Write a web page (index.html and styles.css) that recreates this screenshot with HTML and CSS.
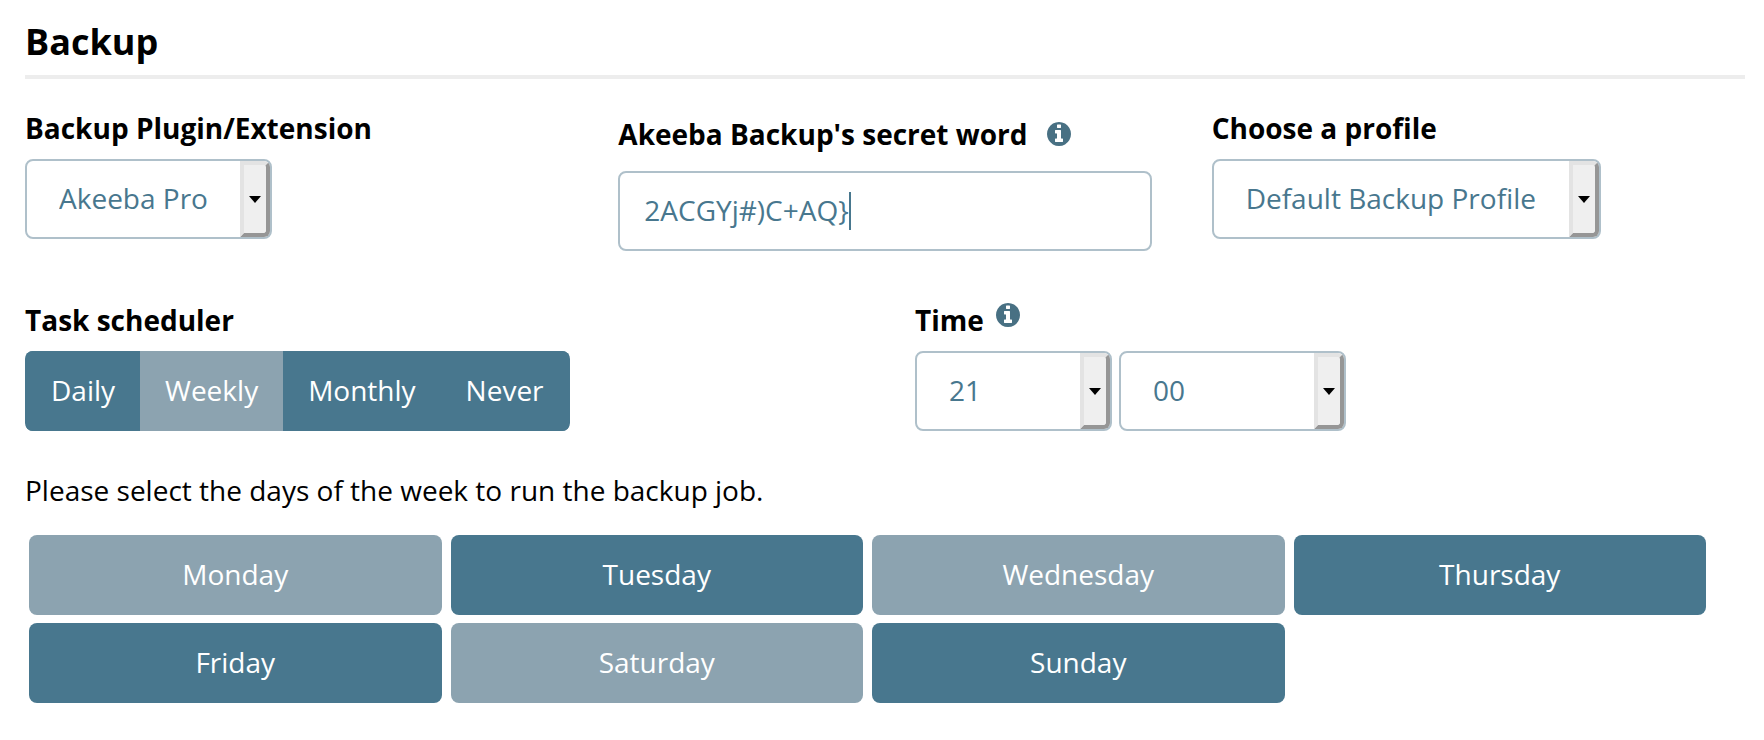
FILE: index.html
```html
<!DOCTYPE html>
<html lang="en">
<head>
<meta charset="utf-8">
<title>Backup</title>
<link rel="stylesheet" href="styles.css">
</head>
<body>
<svg class="sprite" aria-hidden="true">
  <symbol id="info" viewBox="128 128 1536 1536">
    <path d="M1152 1376v-160q0-14-9-23t-23-9h-96v-512q0-14-9-23t-23-9h-320q-14 0-23 9t-9 23v160q0 14 9 23t23 9h96v320h-96q-14 0-23 9t-9 23v160q0 14 9 23t23 9h448q14 0 23-9t9-23zm-128-896v-160q0-14-9-23t-23-9h-192q-14 0-23 9t-9 23v160q0 14 9 23t23 9h192q14 0 23-9t9-23zm640 416q0 209-103 385.5t-279.5 279.5-385.5 103-385.5-103-279.5-279.5-103-385.5 103-385.5 279.5-279.5 385.5-103 385.5 103 279.5 279.5 103 385.5z"/>
  </symbol>
  <symbol id="arrow" viewBox="0 0 12 7">
    <path d="M0 0h12L6 7z"/>
  </symbol>
</svg>
<main class="panel">
  <h1 class="panel-title">Backup</h1>

  <div class="row row-thirds">
    <div class="field">
      <div class="field-head"><label for="plugin">Backup Plugin/Extension</label></div>
      <div class="select">
        <select id="plugin"><option>Akeeba Pro</option></select>
        <span class="select-button"><svg class="arrow"><use href="#arrow"/></svg></span>
      </div>
    </div>
    <div class="field field-secret">
      <div class="field-head">
        <label for="secret">Akeeba Backup's secret word</label>
        <svg class="info"><use href="#info"/></svg>
      </div>
      <label class="textbox">
        <input id="secret" type="text" value="2ACGYj#)C+AQ}" autocomplete="off" spellcheck="false">
        <span class="caret"></span>
      </label>
    </div>
    <div class="field">
      <div class="field-head"><label for="profile">Choose a profile</label></div>
      <div class="select">
        <select id="profile"><option>Default Backup Profile</option></select>
        <span class="select-button"><svg class="arrow"><use href="#arrow"/></svg></span>
      </div>
    </div>
  </div>

  <div class="row row-halves">
    <div class="field">
      <div class="field-head" id="scheduler">Task scheduler</div>
      <div class="segments" role="group" aria-labelledby="scheduler">
        <button type="button" class="button">Daily</button>
        <button type="button" class="button selected" aria-pressed="true">Weekly</button>
        <button type="button" class="button">Monthly</button>
        <button type="button" class="button">Never</button>
      </div>
    </div>
    <div class="field">
      <div class="field-head field-head-time">
        <label for="hour">Time</label>
        <svg class="info"><use href="#info"/></svg>
      </div>
      <div class="time">
        <div class="select select-hour">
          <select id="hour"><option>21</option></select>
          <span class="select-button"><svg class="arrow"><use href="#arrow"/></svg></span>
        </div>
        <div class="select select-minute">
          <select id="minute" aria-label="Minutes"><option>00</option></select>
          <span class="select-button"><svg class="arrow"><use href="#arrow"/></svg></span>
        </div>
      </div>
    </div>
  </div>

  <p class="hint" id="days-hint">Please select the days of the week to run the backup job.</p>
  <div class="days" role="group" aria-labelledby="days-hint">
    <button type="button" class="button selected" aria-pressed="true">Monday</button>
    <button type="button" class="button">Tuesday</button>
    <button type="button" class="button selected" aria-pressed="true">Wednesday</button>
    <button type="button" class="button">Thursday</button>
    <button type="button" class="button">Friday</button>
    <button type="button" class="button selected" aria-pressed="true">Saturday</button>
    <button type="button" class="button">Sunday</button>
  </div>
</main>
</body>
</html>
```

FILE: styles.css
```css
:root {
  --teal: #48778e;
  --teal-light: #8ca3b0;
  --line: #afc0ca;
}

* {
  box-sizing: border-box;
}

body {
  margin: 0;
  background: #fff;
  color: #000;
  font: 28px/38px "Open Sans", "Noto Sans", sans-serif;
}

.sprite {
  display: none;
}

.panel {
  padding: 18px 19px 37px 25px;
}

.panel-title {
  margin: 0;
  padding-bottom: 9px;
  border-bottom: 4px solid #ededed;
  font-size: 36px;
  line-height: 48px;
}

.row {
  display: grid;
  column-gap: 60px;
}

.row-thirds {
  grid-template-columns: repeat(3, 1fr);
  margin-top: 30px;
}

.row-halves {
  grid-template-columns: repeat(2, 1fr);
  margin-top: 50px;
}

.field-head {
  display: flex;
  align-items: center;
  margin-bottom: 12px;
  font-weight: 700;
}

.field-secret {
  padding-top: 6px;
}

.field-secret .field-head {
  gap: 19px;
  margin-bottom: 18px;
}

.field-head-time {
  align-items: flex-start;
  gap: 12px;
}

.field-head-time .info {
  margin-top: 2px;
}

.info {
  width: 24px;
  height: 24px;
  fill: #487083;
}

.select,
.textbox {
  height: 80px;
  border: 2px solid var(--line);
  border-radius: 8px;
  background: #fff;
}

.select {
  display: inline-grid;
  vertical-align: top;
}

.select select,
.select-button {
  grid-area: 1 / 1;
}

.select select {
  appearance: none;
  margin: 0;
  padding: 0 62px 2px 32px;
  border: 0;
  background: none;
  color: var(--teal);
  font: inherit;
}

.select-button {
  display: flex;
  align-items: center;
  justify-content: center;
  justify-self: end;
  width: 30px;
  border: 4px solid;
  border-color: #e3e3e3 #969696 #969696 #e3e3e3;
  border-radius: 0 6px 6px 0;
  background: #efefef;
  pointer-events: none;
}

.arrow {
  width: 12px;
  height: 7px;
}

.select-hour {
  width: 197px;
}

.select-minute {
  width: 227px;
}

.time {
  display: flex;
  gap: 7px;
}

.textbox {
  display: flex;
  align-items: center;
  padding: 0 24px;
  cursor: text;
}

.textbox input {
  field-sizing: content;
  padding: 0 0 2px;
  border: 0;
  outline: 0;
  background: none;
  color: var(--teal);
  font: inherit;
}

.caret {
  width: 2px;
  height: 38px;
  background: var(--teal);
}

.button {
  height: 80px;
  padding: 0 25px 2px;
  border: 0;
  border-radius: 8px;
  background: var(--teal);
  color: #fff;
  font: inherit;
}

.selected {
  background: var(--teal-light);
}

.segments {
  display: inline-flex;
  vertical-align: top;
  overflow: hidden;
  padding: 0 1px;
  border-radius: 8px;
  background: var(--teal);
}

.segments .button {
  border-radius: 0;
}

.hint {
  margin: 40px 0 26px;
}

.days {
  display: grid;
  grid-template-columns: repeat(4, 1fr);
  gap: 8px 9px;
  margin: 0 39px 0 4px;
}
```
